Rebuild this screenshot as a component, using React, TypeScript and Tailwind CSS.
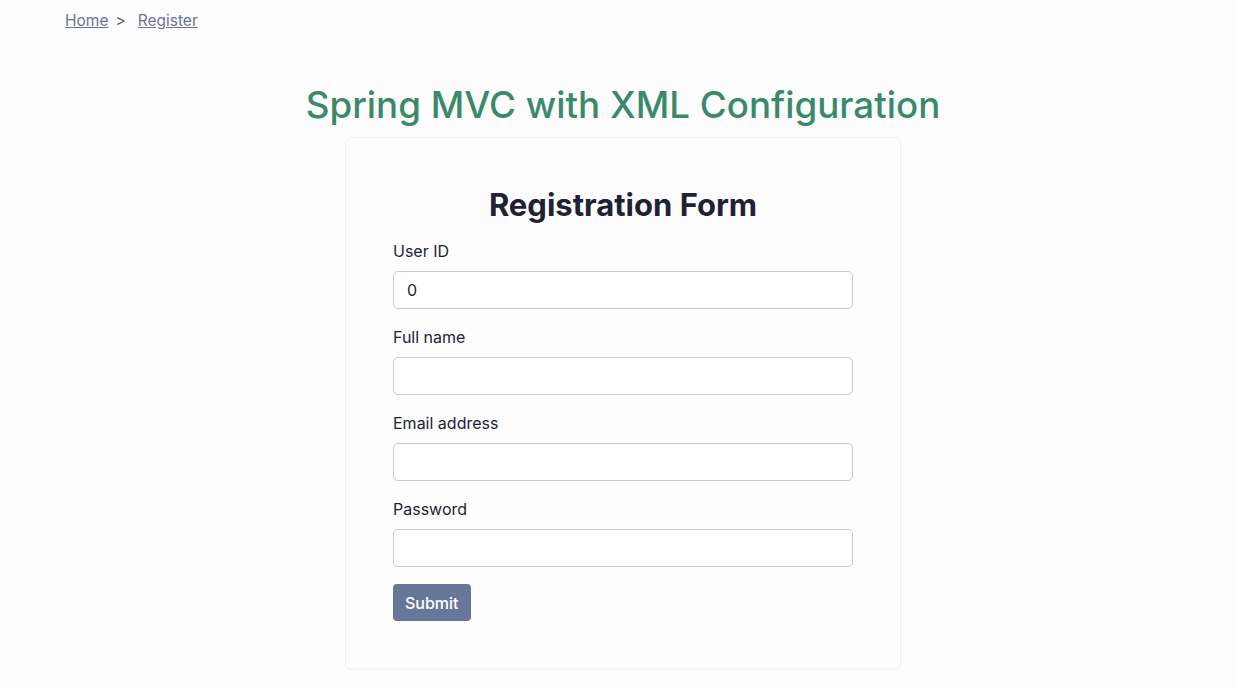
const fields = [
  { id: "userId", label: "User ID", value: "0", type: "text" },
  { id: "fullName", label: "Full name", value: "", type: "text" },
  { id: "email", label: "Email address", value: "", type: "email" },
  { id: "password", label: "Password", value: "", type: "password" },
]

export default function App() {
  return (
    <div className="min-h-screen bg-[#fdfdfe] font-['Inter',sans-serif] text-[#1e2235]">
      <nav className="flex items-center px-[65px] pt-[10px] text-[15.5px] leading-[22px]">
        <a href="#" className="text-[#6b7399] underline">
          Home
        </a>
        <span className="ml-[7px] mr-[12px] text-[#50566e]">&gt;</span>
        <a href="#" className="text-[#6b7399] underline">
          Register
        </a>
      </nav>

      <main className="pl-[11px]">
        <h1 className="mt-[49px] text-center text-[36.75px] font-medium leading-[48px] text-[#3a8a6a]">
          Spring MVC with XML Configuration
        </h1>

        <div className="mx-auto mt-[8px] w-[556px] rounded-md border border-[#f0f0f4] px-[47px] pt-[48px] pb-[48px]">
          <h2 className="text-center text-[31px] font-bold leading-[38px] text-[#1e2235]">
            Registration Form
          </h2>
          <form className="mt-[16px] flex flex-col">
            {fields.map((f) => (
              <div key={f.id} className="mb-[17px] flex flex-col">
                <label
                  htmlFor={f.id}
                  className="mb-[9px] text-[16px] leading-[22px]"
                >
                  {f.label}
                </label>
                <input
                  id={f.id}
                  type={f.type}
                  defaultValue={f.value}
                  className="h-[38px] w-full rounded-[5px] border border-[#c3cbe0] bg-white px-[13px] text-[16px] text-[#1e2235] outline-none"
                />
              </div>
            ))}
            <div>
              <button
                type="submit"
                className="h-[37px] rounded-[4px] bg-[#67779a] px-[12px] text-[16px] font-medium text-white"
              >
                Submit
              </button>
            </div>
          </form>
        </div>
      </main>
    </div>
  )
}
